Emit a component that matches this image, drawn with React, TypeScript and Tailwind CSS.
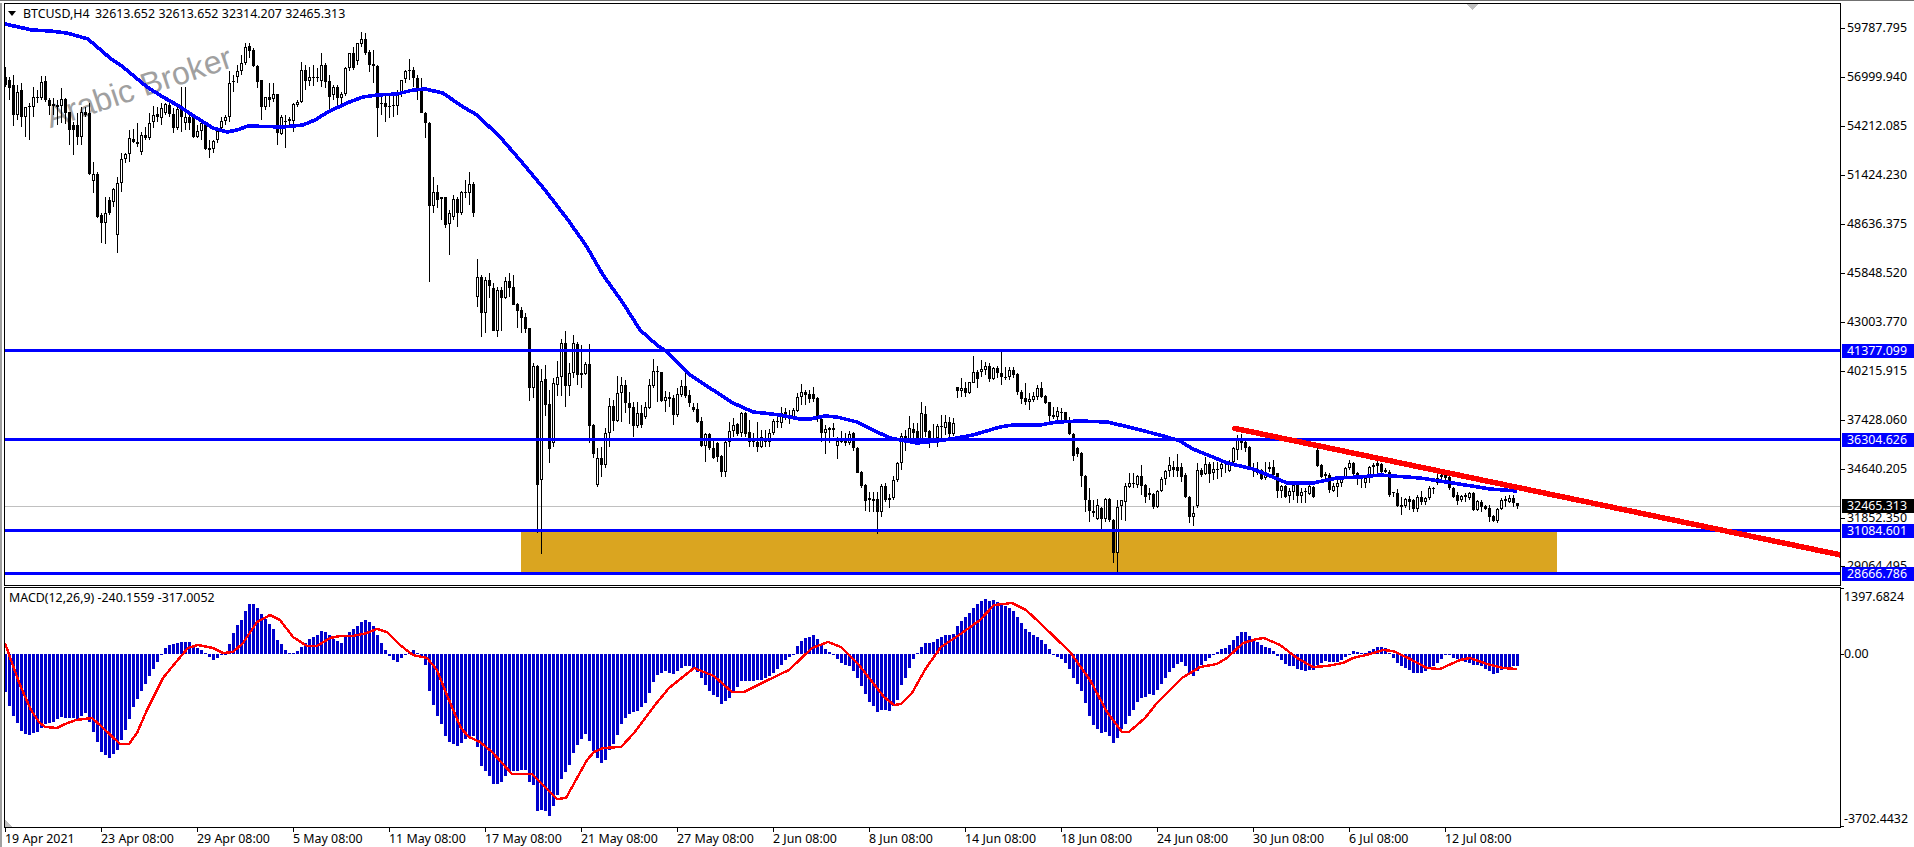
import React from "react";

type Row = [number, number, number, number, number];

// wick top, body top, body bottom, wick bottom, bull – traced from the chart, grouped by the scale they were read at
const A: number[][] = [[200,230,255,260,0],[232,240,265,300,0],[225,255,345,378,0],[255,275,345,360,1],[250,270,352,380,0],[320,320,352,410,1],[310,318,322,420,1],[262,292,322,350,1],[270,292,295,310,0],[228,245,295,300,1],[228,243,300,305,0],[295,300,318,345,0],[295,313,317,345,0],[300,316,320,375,0],[265,297,318,370,1],[295,297,340,372,0],[335,335,390,435,0],[365,375,390,465,0],[340,375,410,435,0],[320,335,410,435,1],[320,335,345,350,0],[310,340,522,525,0],[485,522,542,580,1],[515,522,650,655,0],[640,645,670,730,0],[590,640,668,733,1],[590,600,640,645,0],[565,568,605,620,1],[530,548,705,759,1],[458,478,550,575,1],[460,462,478,490,1],[390,415,462,485,1],[388,418,425,430,0],[370,425,432,440,0],[395,405,455,465,1],[380,405,415,420,0],[338,368,415,420,1],[318,345,365,385,1],[320,342,352,365,0],[310,325,355,375,1],[310,313,338,345,1],[300,315,342,350,0],[325,342,385,400,0],[310,328,385,390,1],[262,325,352,395,0],[262,350,368,390,1],[335,350,370,390,0],[345,352,412,415,0],[375,392,412,415,1],[360,368,392,420,1],[370,375,448,450,0],[420,445,449,475,0],[420,422,448,458,1],[380,392,420,430,1],[352,362,385,395,1],[345,350,362,375,1],[212,248,350,365,1],[225,242,245,275,0],[195,212,230,250,1],[165,190,212,225,1],[128,140,190,195,1],[128,138,152,175,0],[145,150,197,200,0],[195,197,245,265,0],[240,240,322,360,0],[290,292,322,330,1],[250,292,300,320,0],[250,283,298,305,1],[282,283,400,435,0],[345,350,402,405,1],[345,362,365,445,0],[350,358,362,375,0],[310,312,362,395,1],[300,305,315,320,1],[185,210,305,310,1],[195,210,242,270,0],[200,232,242,258,1],[195,232,235,258,0],[205,232,235,245,0],[160,195,243,262,1],[190,195,245,265,0],[225,243,290,330,0],[255,262,285,300,1],[255,260,295,320,0],[275,282,295,320,1],[200,205,282,288,1],[160,160,205,212,1],[140,160,205,210,0],[128,130,182,195,1],[95,118,132,140,1],[100,118,158,165,0],[150,155,195,215,0],[150,193,197,250,0],[195,198,325,410,0],[290,308,313,345,0],[280,310,320,365,0],[285,317,321,355,0],[285,315,319,350,0],[270,280,318,345,1],[240,240,280,290,1],[210,212,238,250,1],[178,211,214,240,0],[200,210,235,260,0],[225,235,265,300,0],[235,265,338,340,0],[335,338,368,415,0],[365,368,618,846,0],[530,575,618,640,1],[555,575,600,625,0],[590,592,597,660,0],[590,592,675,685,0],[630,640,672,765,1],[585,598,650,660,1],[590,598,640,680,0],[572,575,640,645,1],[540,575,578,595,0],[517,552,580,615,1],[545,552,638,650,0]];

const B: number[][] = [[118,172,232,262,1],[165,172,280,350,0],[170,180,280,338,1],[160,180,197,235,0],[190,205,332,333,0],[200,210,332,352,1],[200,210,235,332,0],[172,182,235,238,1],[160,183,203,232,0],[165,202,254,256,0],[250,253,272,323,0],[262,270,293,338,0],[280,292,328,340,0],[325,325,505,542,0],[428,438,505,535,1],[435,438,795,939,0],[448,484,780,1002,1],[435,478,555,588,0],[510,552,688,728,0],[475,490,670,680,1],[422,472,495,528,1],[358,370,472,528,1],[333,370,497,560,0],[430,460,497,528,1],[345,370,460,475,1],[365,372,465,495,0],[375,460,464,505,0],[425,432,462,465,1],[372,432,617,668,0],[612,615,703,715,0],[685,715,795,801,1],[680,715,735,770,0],[625,640,735,745,1],[535,558,640,680,1],[540,558,602,632,0],[468,520,602,605,1],[470,495,520,605,1],[480,495,550,580,0],[515,548,563,612,0],[545,560,617,650,0],[545,578,617,625,1],[555,578,615,625,0],[545,560,592,598,1],[478,495,565,568,1],[418,453,497,505,1],[437,453,457,545,0],[455,455,543,545,0],[512,532,543,575,1],[515,530,537,560,0],[525,533,585,615,0],[505,522,585,590,1],[480,497,525,530,1],[445,497,528,535,0],[510,525,548,560,0],[550,562,570,575,0],[550,567,605,610,0],[590,603,677,680,0],[640,643,677,725,1],[640,643,685,690,0],[655,685,715,718,0],[665,668,712,725,0],[705,708,755,770,0],[660,665,755,770,1],[605,633,667,680,1],[595,615,633,650,1],[610,613,642,648,0],[575,578,640,650,1],[575,578,642,650,0],[600,635,665,682,0],[640,663,667,680,0],[605,665,682,695,0],[630,652,682,685,1],[630,660,667,680,0],[628,640,667,682,1],[598,603,640,645,1],[590,603,607,625,0],[560,578,610,625,1],[565,575,590,600,0],[570,585,595,612,0],[565,570,595,600,1],[518,530,572,575,1]];

const C: number[][] = [[312,337,350,375,1],[330,337,345,375,0],[330,342,357,370,0],[320,342,358,365,0],[352,354,410,425,0],[405,416,458,485,0],[435,448,460,522,1],[440,445,449,490,0],[430,445,449,470,0],[470,483,497,537,1],[453,481,485,490,0],[460,473,490,498,0],[453,462,488,495,1],[455,458,505,512,0],[500,503,578,580,0],[572,576,618,625,0],[612,615,663,693,0],[636,655,659,696,0],[636,658,662,696,0],[636,657,696,762,0],[612,618,696,711,1],[609,618,660,666,0],[642,654,660,684,1],[588,600,654,660,1],[545,550,600,605,1],[460,467,550,570,1],[450,467,480,512,0],[408,445,478,490,1],[428,447,458,480,0],[430,453,478,490,0],[367,400,478,482,1],[378,403,455,470,0],[450,453,478,505,0],[432,476,480,490,0],[432,438,475,502,1],[405,438,442,480,0],[405,427,445,465,1],[412,427,463,470,0],[415,430,463,468,1],[322,322,332,355,0],[295,325,332,352,1],[305,325,338,350,0],[305,307,340,342,1],[228,277,308,310,1],[270,277,296,323,0],[240,268,275,290,1],[245,258,270,285,1],[250,258,297,305,0],[260,265,297,300,1],[258,265,278,295,0],[215,278,290,315,0],[260,290,294,300,0],[262,270,292,300,1],[262,270,285,295,0],[280,282,335,345,0],[330,335,357,372,0],[310,355,367,375,0],[340,358,367,390,1],[337,348,360,365,1],[315,325,350,360,1],[307,325,350,355,0],[345,348,368,372,0],[365,367,408,425,0],[380,406,410,418,0],[380,393,410,425,1],[385,395,399,420,0],[395,397,422,430,0]];

const D: number[][] = [[-10,8,42,45,0],[40,42,107,122,0],[80,85,102,110,0],[95,98,168,200,0],[165,168,240,275,0],[205,240,272,305,0],[240,272,278,290,0],[238,255,298,300,1],[262,265,298,328,0],[235,237,298,305,1],[235,237,300,305,0],[298,300,398,428,0],[240,260,398,456,1],[240,240,258,300,1],[190,198,246,302,1],[160,190,200,205,1],[158,188,192,205,0],[165,168,195,205,1],[135,168,198,225,0],[192,195,232,248,0],[205,220,224,240,0],[220,222,262,268,0],[210,213,260,265,1],[170,178,213,215,1],[150,153,178,195,1],[112,135,153,170,1],[122,142,150,170,0],[103,142,152,172,0],[130,142,170,185,0],[160,165,230,235,0],[228,230,290,310,0],[258,278,290,318,1],[128,150,258,265,1],[145,150,165,170,0],[110,132,162,165,1],[125,132,162,190,0],[125,148,160,180,1],[125,146,150,178,0],[120,132,148,170,1],[122,128,132,160,0],[120,125,152,155,1],[80,85,125,128,1],[45,58,90,120,1],[42,60,68,90,0],[55,67,85,95,0],[78,80,145,150,0],[130,143,147,170,0],[125,148,158,165,0],[148,150,178,180,0],[125,160,175,180,1],[125,142,148,155,1],[120,140,165,170,0],[158,160,212,235,0],[195,198,212,235,1],[195,198,230,235,0],[205,213,228,250,1],[190,195,215,240,1],[190,195,228,250,0],[205,215,228,250,1],[205,213,217,248,0],[195,198,222,225,1],[198,200,232,235,0],[85,90,138,140,0],[133,135,172,175,0],[155,163,167,180,0],[160,165,210,218,0],[190,198,212,215,1],[180,190,200,230,1],[170,178,190,200,1],[140,143,172,175,1],[120,128,145,150,1],[125,130,162,168,0],[155,160,175,195,0],[165,173,177,205,0],[165,175,190,205,1],[138,140,165,190,1],[130,136,140,165,0],[120,130,138,170,0],[128,133,155,160,0],[145,150,157,160,0],[150,157,225,232,0],[215,216,220,232,0],[208,218,258,262,0],[230,256,260,285,0],[235,238,258,265,1],[228,238,245,270,0],[238,240,268,275,0],[225,230,268,275,1],[212,232,245,255,0],[230,235,245,255,1],[197,205,235,240,1],[200,203,207,222,0],[160,175,188,195,1],[150,165,172,190,0],[160,165,175,180,0],[165,170,205,210,0],[200,205,230,235,0],[215,226,243,255,0],[225,228,240,245,1],[220,226,230,245,0],[215,220,233,240,1],[215,218,270,272,0],[240,243,270,272,1],[240,245,260,275,0],[255,258,268,270,0],[255,265,290,305,0],[285,288,303,305,0],[265,268,303,308,1],[235,240,268,270,1],[228,238,242,262,0],[225,233,245,250,1],[225,235,250,262,0],[250,250,258,268,0]];

const toPx = (rows: number[][], y0: number) =>
  rows.map((r) => [y0 + r[0] / 3, y0 + r[1] / 3, y0 + r[2] / 3, y0 + r[3] / 3, r[4]].map(Math.round) as Row);

const candles: Row[] = [...toPx(A, 0), ...toPx(B, 220), ...toPx(C, 280), ...toPx(D, 420)];

const pairs = (s: string) => s.trim().split(/\s+/).map((p) => p.split(",").map(Number));

const MA = "5,24 32,30 50,31 67,33 88,39 110,58 123,67 147,87 163,97 177,105 197,118 213,128 227,132 237,130 248,126 283,127 303,125 315,120 328,112 347,103 363,97 377,95 397,94 413,90 425,89 443,93 460,105 477,115 500,137 520,160 545,190 568,220 587,247 603,275 623,303 640,330 657,345 667,352 690,375 713,390 733,403 753,412 763,413 780,415 800,419 810,419 825,416 837,417 857,422 873,430 890,438 917,443 937,441 957,438 973,435 1000,427 1013,425 1040,425 1057,422 1080,421 1107,422 1133,428 1167,437 1180,441 1193,449 1220,460 1227,463 1253,469 1273,477 1287,483 1313,483 1337,478 1360,477 1380,475 1420,478 1453,483 1490,489 1517,491";

const SIGNAL = "5,643 12,663 20,685 31,710 39,722 45,727 57,728 65,724 76,720 92,718 102,727 120,744 129,744 137,733 147,710 163,678 176,662 188,648 198,645 213,648 223,653 233,652 243,643 257,622 270,615 280,620 293,637 307,646 317,646 330,638 340,636 353,636 367,633 377,629 387,632 400,645 413,655 427,658 437,670 449,700 461,728 469,737 480,742 492,752 512,774 532,774 557,799 566,798 587,760 594,752 603,748 621,747 634,733 655,705 669,688 694,668 714,676 732,692 744,692 766,681 789,670 812,648 828,642 841,647 859,665 884,697 894,705 901,704 912,693 926,668 941,647 962,633 980,620 994,605 1012,603 1026,610 1040,623 1070,652 1090,680 1107,712 1122,732 1129,732 1145,718 1157,703 1182,678 1200,667 1217,664 1227,658 1243,643 1257,639 1264,638 1280,645 1297,658 1313,667 1327,666 1343,663 1353,658 1370,654 1383,650 1393,651 1410,659 1427,668 1440,669 1460,660 1470,658 1487,664 1503,668 1517,669";

const HIST = pairs("5,690 8,701 12,714 16,720 20,729 24,733 29,735 37,732 45,724 53,722 61,717 78,719 86,713 92,728 97,741 101,752 109,758 118,749 126,729 133,708 141,692 149,677 157,663 161,655 162,653 166,647 170,645 182,642 190,642 197,648 203,650 207,654 213,660 222,655 227,654 230,642 233,634 237,626 242,619 246,610 249,604 253,603 257,607 262,615 266,620 273,628 277,639 282,645 285,650 290,653 297,652 302,646 310,638 317,635 322,631 327,632 330,636 337,641 342,643 348,633 357,626 362,621 366,620 370,622 373,625 378,636 382,644 386,651 390,657 397,662 402,658 406,654 413,650 417,652 422,658 426,666 429,689 433,704 438,717 442,725 446,737 450,743 458,746 466,738 473,735 478,748 480,764 484,770 488,773 494,785 501,783 505,777 510,771 526,770 529,782 534,785 537,811 544,809 549,817 553,807 557,797 561,780 569,766 574,751 577,746 581,740 585,733 589,739 592,749 597,757 601,763 606,760 609,751 613,745 618,734 622,723 626,717 630,713 637,711 641,707 646,702 653,683 657,675 666,671 673,674 677,671 685,666 691,666 698,672 702,679 707,688 712,694 719,698 721,704 726,701 730,697 733,692 737,688 741,681 755,681 764,679 771,675 774,672 778,668 783,663 787,658 790,657 794,653 797,647 801,641 806,638 814,635 817,638 821,643 825,648 829,652 834,655 838,659 841,663 850,666 853,670 857,677 861,685 866,695 869,701 874,706 877,712 882,710 890,711 894,705 898,699 901,686 906,677 910,667 913,660 917,654 922,646 926,643 934,642 938,639 942,637 946,635 953,635 957,627 961,621 966,617 974,607 980,602 985,599 989,601 994,600 1001,603 1005,606 1012,609 1016,615 1021,622 1025,628 1029,632 1034,635 1040,639 1045,643 1049,648 1053,653 1057,657 1062,659 1066,663 1069,668 1073,677 1077,683 1082,692 1086,704 1089,715 1093,724 1097,728 1102,733 1105,732 1109,735 1113,744 1117,739 1121,730 1125,725 1129,717 1133,711 1137,703 1141,698 1145,697 1149,694 1153,695 1157,691 1161,685 1165,679 1169,672 1173,668 1177,664 1181,662 1185,665 1189,673 1193,676 1197,672 1201,666 1205,661 1209,658 1213,654 1217,652 1221,649 1225,648 1229,645 1233,641 1237,636 1241,632 1245,631 1249,635 1253,639 1257,641 1261,645 1265,647 1269,648 1273,650 1277,656 1281,659 1285,664 1289,666 1293,666 1297,669 1301,670 1305,671 1309,670 1313,671 1317,665 1321,663 1325,661 1329,662 1333,662 1337,662 1341,660 1345,657 1349,654 1353,651 1357,652 1361,653 1365,653 1369,651 1373,649 1377,647 1385,647 1389,652 1393,657 1397,662 1401,666 1405,668 1409,670 1413,673 1422,673 1427,670 1432,667 1437,663 1442,659 1445,655 1449,655 1453,658 1460,660 1467,662 1473,665 1480,665 1483,667 1488,670 1493,674 1497,673 1502,670 1507,667 1513,666 1518,666");

const histAt = (x: number) => {
  for (let k = 1; k < HIST.length; k++) {
    if (x <= HIST[k][0]) {
      const [x0, y0] = HIST[k - 1];
      const [x1, y1] = HIST[k];
      return Math.round(y0 + ((y1 - y0) * (x - x0)) / (x1 - x0));
    }
  }
  return HIST[HIST.length - 1][1];
};

const hist = Array.from({ length: 379 }, (_, i) => ({ x: 4 + 4 * i, y: histAt(5.5 + 4 * i) }));

const levels = [350, 439, 530, 573];

const priceTicks = ["59787.795", "56999.940", "54212.085", "51424.230", "48636.375", "45848.520", "43003.770", "40215.915", "37428.060", "34640.205", "31852.350", "29064.495"];

const tags = [
  { y: 351, text: "41377.099", bg: "bg-[#0000ff]" },
  { y: 440, text: "36304.626", bg: "bg-[#0000ff]" },
  { y: 506, text: "32465.313", bg: "bg-black" },
  { y: 531, text: "31084.601", bg: "bg-[#0000ff]" },
  { y: 574, text: "28666.786", bg: "bg-[#0000ff]" },
];

const macdTicks = [
  { tick: 588, y: 597, text: "1397.6824" },
  { tick: 654, y: 654, text: "0.00" },
  { tick: 826, y: 819, text: "-3702.4432" },
];

const dates = ["19 Apr 2021", "23 Apr 08:00", "29 Apr 08:00", "5 May 08:00", "11 May 08:00", "17 May 08:00", "21 May 08:00", "27 May 08:00", "2 Jun 08:00", "8 Jun 08:00", "14 Jun 08:00", "18 Jun 08:00", "24 Jun 08:00", "30 Jun 08:00", "6 Jul 08:00", "12 Jul 08:00"];

function MainChart() {
  return (
    <svg className="relative block" width={1835} height={581} viewBox="5 4 1835 581" shapeRendering="crispEdges">
      <rect x={521} y={530} width={1036} height={43} fill="#daa520" />
      <rect x={5} y={506} width={1835} height={1} fill="#c0c0c0" />
      <polygon points="1466,4 1478,4 1472,10" fill="#c0c0c0" />
      {candles.map(([h, t, b, l, bull], i) => {
        const x = 5 + 4 * i;
        const bh = Math.max(b - t, 1);
        return (
          <g key={i}>
            <rect x={x} y={h} width={1} height={Math.max(l - h, 1)} fill="#000" />
            <rect x={x - 1} y={t} width={3} height={bh} fill="#000" />
            {bull === 1 && bh > 2 && <rect x={x} y={t + 1} width={1} height={bh - 2} fill="#fff" />}
          </g>
        );
      })}
      <polyline points={MA} fill="none" stroke="#0000ff" strokeWidth={3.6} />
      {levels.map((y) => (
        <rect key={y} x={5} y={y - 1} width={1835} height={3} fill="#0000ff" />
      ))}
      <line x1={1235} y1={428.4} x2={1860} y2={559} stroke="#ff0000" strokeWidth={5.5} />
      <circle cx={1235} cy={428.4} r={2.75} fill="#ff0000" />
    </svg>
  );
}

function MacdChart() {
  return (
    <svg className="block" width={1835} height={239} viewBox="5 588 1835 239" shapeRendering="crispEdges">
      {hist.map(({ x, y }) => (
        <rect key={x} x={x} y={Math.min(y, 654)} width={3} height={Math.max(Math.abs(y - 654), 1)} fill="#0000cd" />
      ))}
      <polyline points={SIGNAL} fill="none" stroke="#ff0000" strokeWidth={2.4} />
      <polygon points="5,820 12,827 5,827" fill="#c0c0c0" />
    </svg>
  );
}

export default function App() {
  return (
    <div className="flex h-[847px] w-[1914px] flex-col overflow-hidden bg-white font-['Noto_Sans',sans-serif] text-[12.4px] leading-[14px] text-black">
      <div className="h-px shrink-0 bg-[#707070]" />
      <div className="mt-[2px] flex flex-1">
        <div className="ml-0 mr-[2px] w-[2px] bg-[#a0a0a0]" />
        <div className="flex w-[1910px] flex-col">
          <div className="flex h-[583px]">
            <div className="relative w-[1837px] shrink-0 border border-black">
              <span className="absolute left-[37px] top-[65px] -rotate-[18.5deg] whitespace-nowrap font-['Liberation_Sans',sans-serif] text-[32px] leading-[37px] text-[#a0a0a0]">
                Arabic Broker
              </span>
              <MainChart />
              <span className="absolute left-[3px] top-[7px] h-0 w-0 border-x-[4.5px] border-t-[5px] border-x-transparent border-t-black" />
              <span className="absolute left-[18px] top-[3px] whitespace-nowrap">BTCUSD,H4</span>
              <span className="absolute left-[90px] top-[3px] flex gap-[3.4px] whitespace-nowrap">
                <span>32613.652</span>
                <span>32613.652</span>
                <span>32314.207</span>
                <span>32465.313</span>
              </span>
            </div>
            <div className="relative flex-1">
              {priceTicks.map((t, k) => {
                const y = 28 + 48.95 * k;
                return (
                  <React.Fragment key={t}>
                    <span className="absolute left-0 h-px w-[4px] bg-black" style={{ top: Math.round(y) - 3 }} />
                    <span className="absolute left-[6px] -translate-y-1/2" style={{ top: y - 3 }}>
                      {t}
                    </span>
                  </React.Fragment>
                );
              })}
              {tags.map((t) => (
                <span key={t.text} className={`absolute left-[1px] right-0 flex h-[14px] -translate-y-1/2 items-center pl-[5px] text-white ${t.bg}`} style={{ top: t.y - 3 }}>
                  {t.text}
                </span>
              ))}
            </div>
          </div>
          <div className="mt-px flex h-[241px]">
            <div className="relative w-[1837px] shrink-0 border border-black">
              <MacdChart />
              <span className="absolute left-[4px] top-[3px] whitespace-nowrap">MACD(12,26,9) -240.1559 -317.0052</span>
            </div>
            <div className="relative flex-1">
              {macdTicks.map((t) => (
                <React.Fragment key={t.text}>
                  <span className="absolute left-0 h-px w-[3px] bg-black" style={{ top: t.tick - 587 }} />
                  <span className="absolute left-[3px] -translate-y-1/2 whitespace-nowrap" style={{ top: t.y - 587 }}>
                    {t.text}
                  </span>
                </React.Fragment>
              ))}
            </div>
          </div>
          <div className="relative flex-1">
            {dates.map((d, k) => (
              <React.Fragment key={d}>
                <span className="absolute top-0 h-[4px] w-px bg-black" style={{ left: 1 + 96 * k }} />
                <span className="absolute top-[4px] whitespace-nowrap" style={{ left: 1 + 96 * k }}>
                  {d}
                </span>
              </React.Fragment>
            ))}
          </div>
        </div>
      </div>
    </div>
  );
}
